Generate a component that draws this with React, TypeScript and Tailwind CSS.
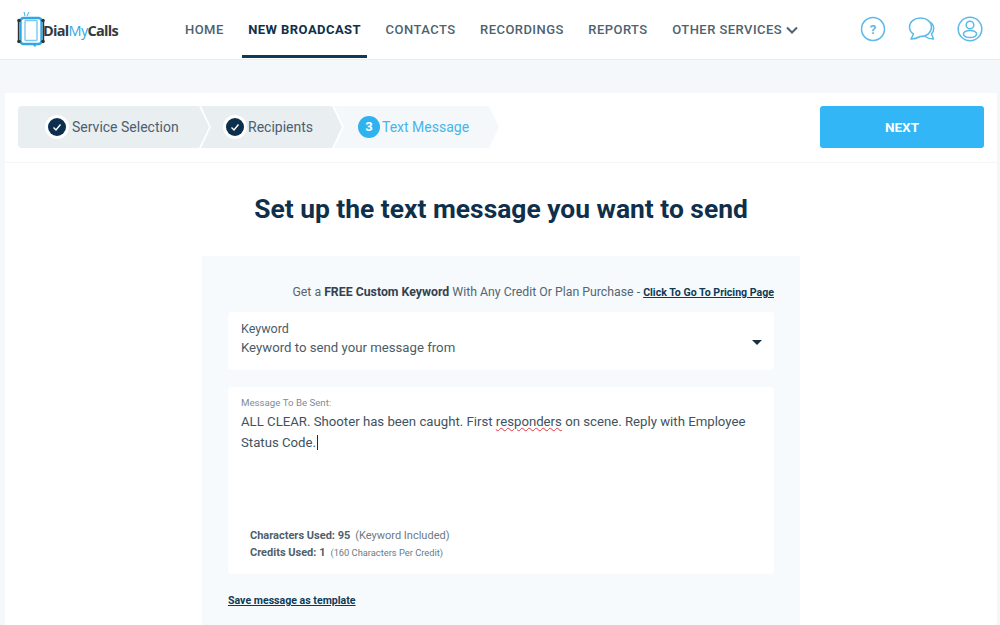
import React from "react";

const navItems = ["HOME", "NEW BROADCAST", "CONTACTS", "RECORDINGS", "REPORTS"];

const Logo = () => (
  <div className="flex items-center">
    <svg width="28" height="36" viewBox="0 0 28 36" fill="none">
      <path d="M8 5 L7 1 M10 5 L12 1" stroke="#3fb1ea" strokeWidth="1" />
      <rect x="3.5" y="7" width="21" height="26" rx="3" stroke="#2fa8e6" strokeWidth="2.4" fill="#fff" />
      <rect x="8" y="9.5" width="12" height="20" rx="1" stroke="#7cc8ef" strokeWidth="1.4" fill="#fff" />
      <path d="M1.5 10 V30 M26.5 10 V30" stroke="#333" strokeWidth="1.4" />
      <circle cx="2" cy="9.5" r="1.8" fill="#333" />
      <circle cx="26" cy="9.5" r="1.8" fill="#333" />
      <circle cx="2" cy="30.5" r="1.8" fill="#333" />
      <circle cx="26" cy="30.5" r="1.8" fill="#333" />
      <path d="M15 33 H20 L18 36 Z" fill="#2fa8e6" />
    </svg>
    <span className="-ml-[2px] mt-[4px] text-[14.5px] font-bold tracking-[-0.7px] font-['Open_Sans',sans-serif] text-[#333a40]">
      Dial<span className="text-[#2fa8e6] font-normal">My</span>Calls
    </span>
  </div>
);

const HeaderIcons = () => (
  <div className="flex items-center gap-[21px]">
    <svg className="mr-px" width="26" height="26" viewBox="0 0 26 26" fill="none" stroke="#5cb9e8" strokeWidth="1.5">
      <circle cx="13" cy="13" r="11.5" />
      <text x="13" y="18" textAnchor="middle" fontSize="13" fontWeight="700" fill="#5cb9e8" stroke="none" fontFamily="Roboto, sans-serif">?</text>
    </svg>
    <svg width="28" height="26" viewBox="0 0 28 26" fill="none" stroke="#5cb9e8" strokeWidth="1.5" strokeLinejoin="round" strokeLinecap="round">
      <path d="M23.5 7 C26.5 10 26.5 15 23.5 18 L25.5 23 C22.5 23 19 22 16 20" />
      <path d="M12.5 2 C6 2 1.5 6 1.5 11 C1.5 14 3 16.5 5.5 18 L3 23 C6.5 23 9.5 22 12 20.5 C19 20.5 23.5 16.5 23.5 11 C23.5 6 19 2 12.5 2 Z" fill="#fff" />
    </svg>
    <svg width="26" height="26" viewBox="0 0 26 26" fill="none" stroke="#5cb9e8" strokeWidth="1.5">
      <circle cx="13" cy="13" r="11.8" />
      <circle cx="13" cy="9" r="3.8" />
      <ellipse cx="13" cy="18" rx="6.6" ry="3.6" />
    </svg>
  </div>
);

const Check = () => (
  <span className="flex h-[24px] w-[24px] shrink-0 items-center justify-center rounded-full bg-white">
    <span className="flex h-[18px] w-[18px] items-center justify-center rounded-full bg-[#0c2f4d]">
      <svg width="10" height="10" viewBox="0 0 10 10" fill="none" stroke="#fff" strokeWidth="1.4">
        <path d="M1.5 5.5 L4 8 L8.5 2.5" />
      </svg>
    </span>
  </span>
);

const Stepper = () => (
  <div className="flex h-[42px] text-[14px]">
    <div className="flex w-[191px] items-center gap-[3px] rounded-l bg-[#e9eef0] pl-[27px] text-[#4b6070] [clip-path:polygon(0_0,181px_0,100%_50%,181px_100%,0_100%)]">
      <Check />
      <span>Service Selection</span>
    </div>
    <div className="-ml-[8px] flex w-[141px] items-center gap-px bg-[#e9eef0] pl-[22px] text-[#4b6070] [clip-path:polygon(0_0,131px_0,100%_50%,131px_100%,0_100%,10px_50%)]">
      <Check />
      <span>Recipients</span>
    </div>
    <div className="-ml-[8px] flex w-[165px] items-center gap-[2px] bg-[#f5f8fb] pl-[24px] text-[#45b5ea] [clip-path:polygon(0_0,155px_0,100%_50%,155px_100%,0_100%,10px_50%)]">
      <span className="flex h-[22px] w-[22px] items-center justify-center rounded-full bg-[#2fb3f0] text-[13px] font-bold text-white">3</span>
      <span>Text Message</span>
    </div>
  </div>
);

export default function App() {
  return (
    <div className="h-[625px] w-[1000px] overflow-hidden bg-[#f5f8fb] font-['Roboto',sans-serif]">
      <header className="flex h-[60px] items-center border-b border-[#e8eef3] bg-white pl-[17px] pr-[17px]">
        <div className="w-[168px] -mt-[1px]">
          <Logo />
        </div>
        <nav className="flex h-full items-center gap-[24.5px] text-[13px] font-medium tracking-[0.45px] text-[#4e6270]">
          {navItems.map((item) => (
            <a
              key={item}
              className={
                item === "NEW BROADCAST"
                  ? "relative flex h-full items-center font-bold text-[#0f2f4a]"
                  : "flex h-full items-center"
              }
            >
              {item}
              {item === "NEW BROADCAST" && (
                <span className="absolute -left-[6px] -right-[6px] bottom-[1px] h-[3px] bg-[#0f3a55]" />
              )}
            </a>
          ))}
          <a className="flex h-full items-center gap-[4px]">
            OTHER SERVICES
            <svg width="12" height="8" viewBox="0 0 12 8" fill="none" stroke="#4e6270" strokeWidth="2">
              <path d="M1 1.5 L6 6.5 L11 1.5" />
            </svg>
          </a>
        </nav>
        <div className="ml-auto -mt-[1px]">
          <HeaderIcons />
        </div>
      </header>

      <main className="mx-[5px] mt-[33px] w-[992px] bg-white">
        <div className="flex h-[70px] items-center justify-between border-b border-[#f3f6f9] pb-[1px] pl-[13px] pr-[13px]">
          <Stepper />
          <button className="h-[42px] w-[164px] rounded-[3px] bg-[#32b6f5] text-[13.5px] font-bold text-white">NEXT</button>
        </div>

        <h1 className="mt-[29px] text-center text-[26.4px] leading-[34px] font-bold text-[#0f2f4a]">
          Set up the text message you want to send
        </h1>

        <section className="mx-auto mt-[30px] h-[400px] w-[598px] bg-[#f7fafd] px-[26px] pt-[29px]">
          <p className="text-right text-[12.3px] leading-[15px] text-[#55656f]">
            Get a <b className="font-bold text-[#33424e]">FREE Custom Keyword</b> With Any Credit Or Plan Purchase -{" "}
            <a className="text-[10.6px] font-bold text-[#0f3a55] underline">Click To Go To Pricing Page</a>
          </p>

          <div className="mt-[12px] flex h-[58px] items-center justify-between rounded bg-white pl-[13px] pr-[12px] text-[13.2px] leading-[19px] text-[#4b5c68]">
            <div className="mb-[6px]">
              <div className="text-[12.5px]">Keyword</div>
              <div>Keyword to send your message from</div>
            </div>
            <span className="mt-[2px] h-0 w-0 border-x-[5px] border-t-[5px] border-x-transparent border-t-[#1d2f3e]" />
          </div>

          <div className="mt-[17px] flex h-[187px] flex-col rounded bg-white pl-[13px] pr-[13px] pt-[10px]">
            <label className="text-[9.7px] leading-[11px] text-[#808c95]">Message To Be Sent:</label>
            <p className="mt-[3px] text-[13.2px] leading-[21px] text-[#3f5260]">
              ALL CLEAR. Shooter has been caught. First{" "}
              <span className="underline decoration-[#e0363c] decoration-wavy decoration-1">responders</span> on scene. Reply with Employee Status Code.
              <span className="ml-px inline-block h-[15px] w-px translate-y-[3px] bg-[#1d2f3e]" />
            </p>
            <div className="mt-auto mb-[13px] ml-[9px] text-[#6b7a85]">
              <div className="text-[11px] leading-[17px]">
                <b className="font-bold text-[#4f5f6b]">Characters Used: 95</b>
                <span className="ml-[5px]">(Keyword Included)</span>
              </div>
              <div className="text-[9.3px] leading-[17px]">
                <b className="text-[11px] font-bold text-[#4f5f6b]">Credits Used: 1</b>
                <span className="ml-[5px]">(160 Characters Per Credit)</span>
              </div>
            </div>
          </div>

          <a className="mt-[20px] block text-[10.6px] leading-[14px] font-bold text-[#0f3a55] underline">Save message as template</a>
        </section>
      </main>
    </div>
  );
}
